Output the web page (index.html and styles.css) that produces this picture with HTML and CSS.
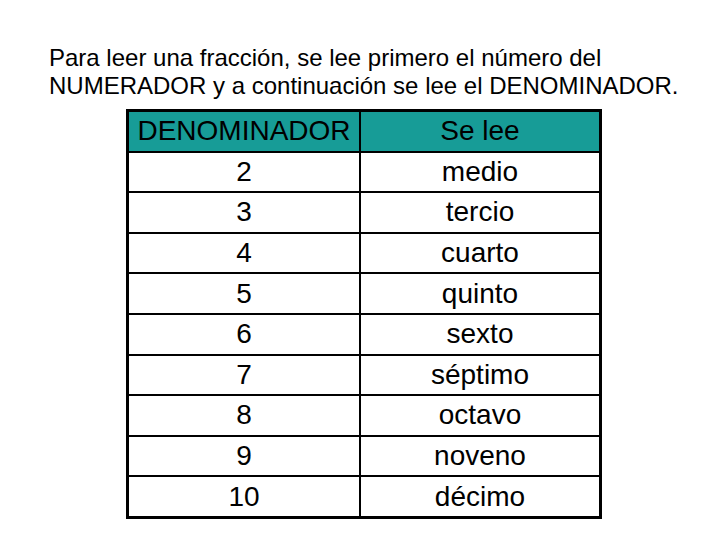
FILE: index.html
```html
<!DOCTYPE html>
<html lang="es">
<head>
<meta charset="utf-8">
<title>Fracciones</title>
<link rel="stylesheet" href="styles.css">
</head>
<body>
<div class="slide">
  <p class="intro">Para leer una fracción, se lee primero el número del<br>NUMERADOR y a continuación se lee el DENOMINADOR.</p>
  <div class="table">
    <div class="cell head">DENOMINADOR</div><div class="cell head">Se lee</div>
    <div class="cell">2</div><div class="cell">medio</div>
    <div class="cell">3</div><div class="cell">tercio</div>
    <div class="cell">4</div><div class="cell">cuarto</div>
    <div class="cell">5</div><div class="cell">quinto</div>
    <div class="cell">6</div><div class="cell">sexto</div>
    <div class="cell">7</div><div class="cell">séptimo</div>
    <div class="cell">8</div><div class="cell">octavo</div>
    <div class="cell">9</div><div class="cell">noveno</div>
    <div class="cell">10</div><div class="cell">décimo</div>
  </div>
</div>
</body>
</html>
```
FILE: styles.css
```css
html, body {
  margin: 0;
  padding: 0;
  background: #ffffff;
}
.slide {
  width: 720px;
  height: 540px;
  padding-top: 44px;
  box-sizing: border-box;
  font-family: "Liberation Sans", Arial, sans-serif;
  color: #000000;
}
.intro {
  margin: 0 0 9px 49px;
  font-size: 24px;
  line-height: 28px;
  white-space: nowrap;
}
.table {
  margin-left: 126px;
  width: 476px;
  height: 410px;
  box-sizing: border-box;
  padding: 3px;
  background: #000000;
  display: grid;
  grid-template-columns: 230px 238px;
  grid-template-rows: repeat(10, 1fr);
  gap: 2px;
}
.cell {
  background: #ffffff;
  display: flex;
  align-items: center;
  justify-content: center;
  font-size: 28px;
  line-height: 1;
}
.cell.head {
  background: #179c97;
}
```
